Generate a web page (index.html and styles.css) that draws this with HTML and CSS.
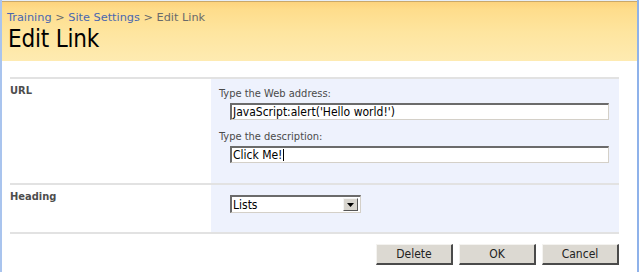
FILE: index.html
```html
<!DOCTYPE html>
<html>
<head>
<meta charset="utf-8">
<link rel="stylesheet" href="styles.css">
</head>
<body>
<div class="frame">
  <div class="topstrip"></div>
  <div class="header">
    <div class="crumbs"><a class="crumb">Training</a> <span class="sep">&gt;</span> <a class="crumb">Site Settings</a> <span class="sep">&gt;</span> <span class="cur">Edit Link</span></div>
    <h1 class="title">Edit Link</h1>
  </div>
  <div class="content">
    <div class="section first">
      <div class="label">URL</div>
      <div class="fields">
        <div class="flabel">Type the Web address:</div>
        <div class="inputbox">JavaScript:alert('Hello world!')</div>
        <div class="flabel second">Type the description:</div>
        <div class="inputbox">Click Me!<span class="caret"></span></div>
      </div>
    </div>
    <div class="section">
      <div class="label">Heading</div>
      <div class="fields heading">
        <div class="select"><span class="sval">Lists</span><span class="sbtn"><svg width="7" height="4" viewBox="0 0 7 4"><path d="M0 0H7L3.5 4Z" fill="#000"/></svg></span></div>
      </div>
    </div>
    <div class="buttons">
      <div class="btn">Delete</div>
      <div class="btn">OK</div>
      <div class="btn">Cancel</div>
    </div>
  </div>
</div>
</body>
</html>
```
FILE: styles.css
```css
html, body { margin: 0; padding: 0; background: #fff; }
body { font-family: Tahoma, "DejaVu Sans Condensed", "DejaVu Sans", sans-serif; }
.frame {
  width: 639px;
  height: 272px;
  border-left: 2px solid #a9c4ee;
  border-right: 2px solid #8fb2ea;
  box-sizing: border-box;
}
.topstrip { height: 1px; background: #e6eef9; }
.header {
  height: 60px;
  box-sizing: border-box;
  border-top: 1px solid #c9a86a;
  background: linear-gradient(#fdd37d 0px, #fedd8c 8px, #fee59f 30px, #feebb2 60px);
  padding: 9px 6px 0 5px;
}
.crumbs { font-family: "DejaVu Sans", sans-serif; font-size: 11.3px; line-height: 13px; color: #6f6f6f; }
.crumb { color: #4a67b0; }
.sep, .cur { color: #6a6a6a; }
.title { margin: 0; padding-top: 1px; padding-left: 1px; font-weight: normal; font-size: 24px; line-height: 28px; color: #000; letter-spacing: -0.2px; }
.content { padding: 16px 18px 0 8px; }
.section {
  display: grid;
  grid-template-columns: 201px 408px;
  border-top: 2px solid #e2e2e2;
}
.section.first .fields { height: 104px; }
.label { font-size: 11px; font-weight: bold; color: #4d4d4d; padding-top: 5px; }
.fields { background: #eef2fd; padding: 8px 10px 0 8px; box-sizing: border-box; }
.flabel { font-size: 11px; color: #4a4a4a; line-height: 13px; }
.flabel.second { margin-top: 10px; }
.inputbox {
  margin: 3px 0 0 11px;
  height: 17px;
  box-sizing: border-box;
  background: #fff;
  border-top: 2px solid #6b6b6b;
  border-left: 2px solid #6b6b6b;
  border-right: 1px solid #d4d0c8;
  border-bottom: 1px solid #d4d0c8;
  font-size: 12px;
  line-height: 14px;
  padding-left: 1px;
  color: #000;
  display: flex;
  align-items: center;
}
.caret { display: inline-block; width: 1px; height: 12px; background: #000; margin-left: 1px; }
.fields.heading { height: 47px; padding: 10px 0 0 19px; }
.select {
  width: 131px;
  height: 18px;
  box-sizing: border-box;
  background: #fff;
  border-top: 2px solid #6b6b6b;
  border-left: 2px solid #6b6b6b;
  border-right: 1px solid #d4d0c8;
  border-bottom: 1px solid #d4d0c8;
  display: flex;
  align-items: center;
  justify-content: space-between;
}
.sval { font-size: 12px; padding-left: 1px; }
.sbtn {
  width: 15px; height: 13px; box-sizing: border-box;
  margin-right: 2px;
  background: #d8d5ce;
  border-right: 1px solid #555;
  border-bottom: 1px solid #555;
  border-top: 1px solid #f4f4f4; border-left: 1px solid #f4f4f4;
  display: flex; align-items: center; justify-content: center;
}
.buttons {
  border-top: 2px solid #e2e2e2;
  width: 609px;
  display: flex;
  justify-content: flex-end;
  gap: 6px;
  padding-top: 10px;
}
.btn {
  width: 77px; height: 21px; box-sizing: border-box;
  background: #dcd9d2;
  border-top: 1px solid #f4f3f0;
  border-left: 1px solid #f4f3f0;
  border-right: 2px solid #4a4a4a;
  border-bottom: 2px solid #4a4a4a;
  font-size: 12px;
  color: #222;
  display: flex; align-items: center; justify-content: center;
}
```
